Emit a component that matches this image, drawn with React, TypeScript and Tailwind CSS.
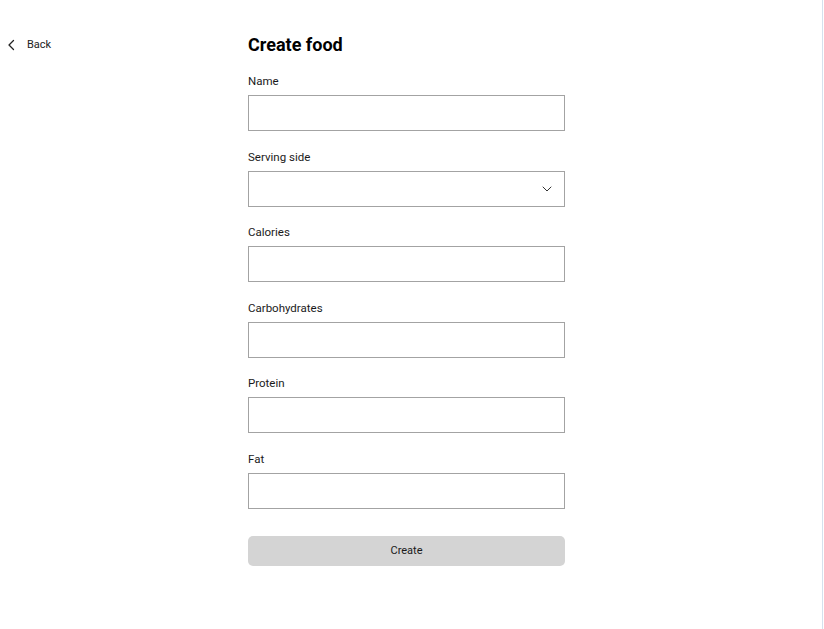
import React from "react";

const fields = ["Name", "Serving side", "Calories", "Carbohydrates", "Protein", "Fat"];

export default function App() {
  return (
    <div className="flex min-h-[629px] w-full bg-white text-[#1a1a1a]" style={{ fontFamily: "Roboto, 'Noto Sans', sans-serif" }}>
      <div className="flex flex-1">
        <div className="w-[248px] shrink-0 pl-[7px] pt-[37px]">
          <button className="flex items-center gap-[11px] text-[11px] leading-4 text-[#222]">
            <svg width="9" height="12" viewBox="0 0 9 12" fill="none" stroke="#222" strokeWidth="1.3" strokeLinecap="round" strokeLinejoin="round">
              <path d="M6.5 1.5L2 6l4.5 4.5" />
            </svg>
            <span>Back</span>
          </button>
        </div>
        <div className="w-[317px] shrink-0 pt-[31px]">
          <h1 className="text-[18px] font-bold leading-7 text-black">Create food</h1>
          <div className="mt-[14px] flex flex-col gap-[17.5px]">
            {fields.map((f) => (
              <div key={f} className="flex flex-col">
                <label className="mb-[6px] text-[11.5px] leading-4 text-[#1a1a1a]">{f}</label>
                {f === "Serving side" ? (
                  <div className="flex h-9 items-center justify-end border border-[#a3a3a3] bg-white pr-[12px]">
                    <svg width="10" height="6" viewBox="0 0 10 6" fill="none" stroke="#333" strokeWidth="1" strokeLinecap="round" strokeLinejoin="round">
                      <path d="M1 1l4 4 4-4" />
                    </svg>
                  </div>
                ) : (
                  <input className="h-9 border border-[#a3a3a3] bg-white px-3 text-xs outline-none" />
                )}
              </div>
            ))}
          </div>
          <button className="mt-[27px] h-[30px] w-full rounded-[5px] bg-[#d4d4d4] text-[11px] leading-[30px] text-[#1a1a1a]">Create</button>
        </div>
      </div>
      <div className="w-px bg-[#d5e1ed]" />
      <div className="w-px" />
    </div>
  );
}
